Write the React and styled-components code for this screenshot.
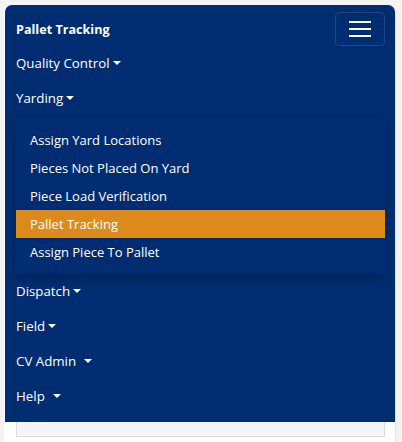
import React from 'react'
import styled, { createGlobalStyle } from 'styled-components'

const GlobalStyle = createGlobalStyle`
    html, body {
        margin: 0;
        padding: 0;
        background: #f3f3f3;
        font-family: "Open Sans", "Noto Sans", sans-serif;
        font-size: 14px;
    }
`

const menus = [
    { name: 'Quality Control' },
    {
        name: 'Yarding',
        open: true,
        items: [
            'Assign Yard Locations',
            'Pieces Not Placed On Yard',
            'Piece Load Verification',
            'Pallet Tracking',
            'Assign Piece To Pallet',
        ],
        active: 'Pallet Tracking',
    },
    { name: 'Dispatch' },
    { name: 'Field' },
    { name: 'CV Admin', spaced: true },
    { name: 'Help', spaced: true },
]

const Page = styled.div`
    margin: 5px 0 0 4px;
    width: 390px;
    min-height: 437px;
    background: #fff;
    border-right: 1px solid #e4e4e4;
    border-radius: 7px 7px 0 0;
    padding-left: 1px;
`

const Navbar = styled.nav`
    background: #002d71;
    border-radius: 7px 7px 0 0;
    padding: 7px 10px 8px 11px;
`

const TopRow = styled.div`
    display: flex;
    align-items: center;
    justify-content: space-between;
    height: 34px;
`

const Brand = styled.a`
    color: #fff;
    font-weight: 700;
    font-size: 12.6px;
    text-decoration: none;
`

const Toggler = styled.button`
    width: 50px;
    height: 34px;
    border: 1px solid rgba(255, 255, 255, 0.12);
    border-radius: 4px;
    background: transparent;
    display: flex;
    flex-direction: column;
    align-items: center;
    justify-content: center;
    gap: 5px;
    padding: 0;
`

const Bar = styled.span`
    display: block;
    width: 22px;
    height: 2px;
    background: #fff;
`

const NavList = styled.ul`
    list-style: none;
    margin: 0;
    padding: 0;
`

const NavLink = styled.a`
    display: block;
    color: #fff;
    font-size: 13.3px;
    line-height: 21px;
    padding: 7px 0;
    text-decoration: none;
`

const Caret = styled.span`
    display: inline-block;
    margin-left: ${(p) => (p.spaced ? '8px' : '3px')};
    vertical-align: 3px;
    border-top: 4.5px solid #fff;
    border-left: 4.5px solid transparent;
    border-right: 4.5px solid transparent;
`

const Menu = styled.ul`
    list-style: none;
    margin: 2px 0 0;
    padding: 8px 0;
    background: #002d71;
    box-shadow: 0 5px 10px rgba(0, 0, 0, 0.22);
    position: relative;
`

const MenuItem = styled.li`
    color: #fff;
    font-size: 13px;
    line-height: 20px;
    padding: 4px 14px;
    background: ${(p) => (p.active ? '#dc8a1b' : 'transparent')};
`

const Footer = styled.div`
    margin: 0 10px 0 11px;
    height: 14px;
    background: #f5f5f5;
    border: 1px solid #dcdcdc;
    border-top: none;
`

const App = () => {
    return (
        <>
            <GlobalStyle />
            <Page>
                <Navbar>
                    <TopRow>
                        <Brand>Pallet Tracking</Brand>
                        <Toggler>
                            <Bar />
                            <Bar />
                            <Bar />
                        </Toggler>
                    </TopRow>
                    <NavList>
                        {menus.map((m) => (
                            <li key={m.name}>
                                <NavLink>
                                    {m.name}
                                    <Caret spaced={m.spaced} />
                                </NavLink>
                                {m.open && (
                                    <Menu>
                                        {m.items.map((it) => (
                                            <MenuItem key={it} active={it === m.active}>
                                                {it}
                                            </MenuItem>
                                        ))}
                                    </Menu>
                                )}
                            </li>
                        ))}
                    </NavList>
                </Navbar>
                <Footer />
            </Page>
        </>
    )
}

export default App
